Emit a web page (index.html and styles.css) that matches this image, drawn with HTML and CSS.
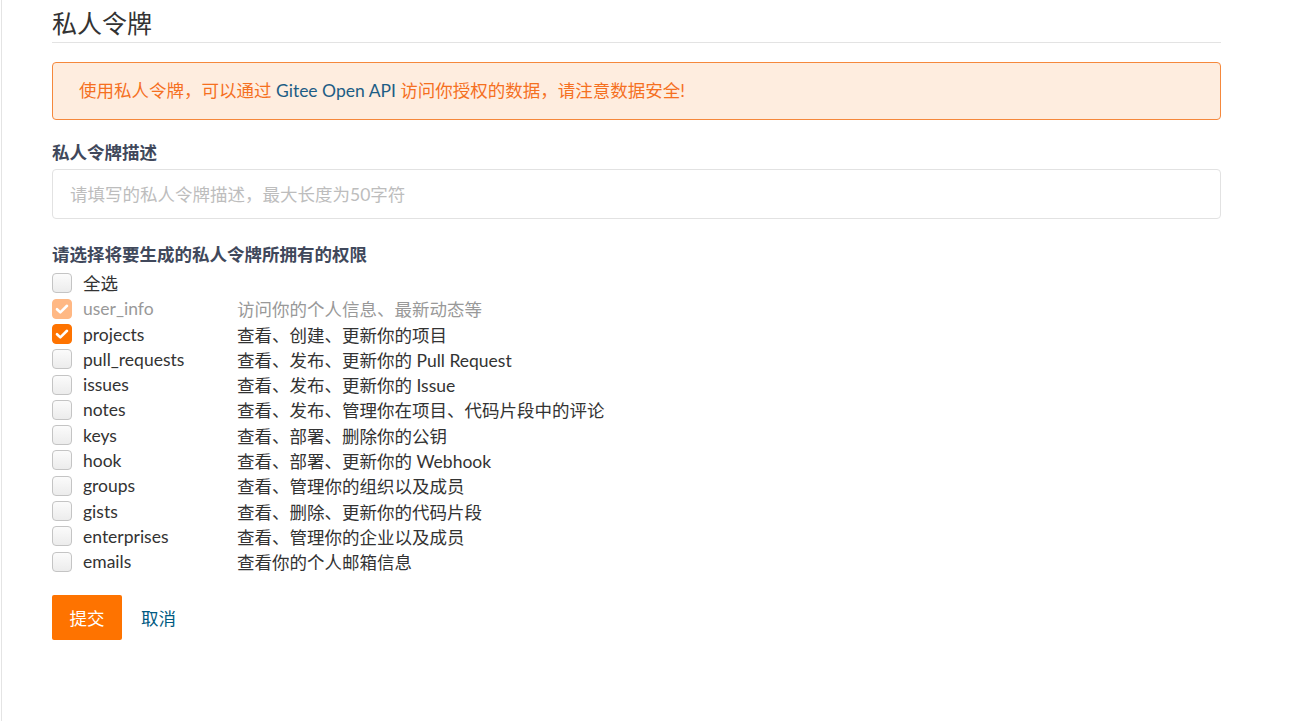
FILE: index.html
```html
<!DOCTYPE html>
<html lang="zh-CN">
<head>
    <meta charset="UTF-8">
    <meta name="viewport" content="width=device-width, initial-scale=1.0">
    <title>私人令牌</title>
    <link rel="stylesheet" href="styles.css">
</head>
<body>

    <div class="page">
        <div class="content">
            <h2 class="title">私人令牌</h2>

            <div class="alert">
                使用私人令牌，可以通过 <span class="api">Gitee Open API</span> 访问你授权的数据，请注意数据安全!
            </div>

            <form class="token-form">
                <label class="field-label">私人令牌描述</label>
                <input class="text-input" type="text" placeholder="请填写的私人令牌描述，最大长度为50字符">

                <label class="field-label scopes-label">请选择将要生成的私人令牌所拥有的权限</label>
                <div class="scopes">
                    <div class="scope select-all">
                        <span class="box"></span>
                        <span class="name">全选</span>
                    </div>
                    <div class="scope disabled">
                        <span class="box checked"><svg viewBox="0 0 20 20"><path d="M5 10.2l3.3 3.2L15 6.8"/></svg></span>
                        <span class="name">user_info</span>
                        <span class="desc">访问你的个人信息、最新动态等</span>
                    </div>
                    <div class="scope">
                        <span class="box checked"><svg viewBox="0 0 20 20"><path d="M5 10.2l3.3 3.2L15 6.8"/></svg></span>
                        <span class="name">projects</span>
                        <span class="desc">查看、创建、更新你的项目</span>
                    </div>
                    <div class="scope">
                        <span class="box"></span>
                        <span class="name">pull_requests</span>
                        <span class="desc">查看、发布、更新你的 Pull Request</span>
                    </div>
                    <div class="scope">
                        <span class="box"></span>
                        <span class="name">issues</span>
                        <span class="desc">查看、发布、更新你的 Issue</span>
                    </div>
                    <div class="scope">
                        <span class="box"></span>
                        <span class="name">notes</span>
                        <span class="desc">查看、发布、管理你在项目、代码片段中的评论</span>
                    </div>
                    <div class="scope">
                        <span class="box"></span>
                        <span class="name">keys</span>
                        <span class="desc">查看、部署、删除你的公钥</span>
                    </div>
                    <div class="scope">
                        <span class="box"></span>
                        <span class="name">hook</span>
                        <span class="desc">查看、部署、更新你的 Webhook</span>
                    </div>
                    <div class="scope">
                        <span class="box"></span>
                        <span class="name">groups</span>
                        <span class="desc">查看、管理你的组织以及成员</span>
                    </div>
                    <div class="scope">
                        <span class="box"></span>
                        <span class="name">gists</span>
                        <span class="desc">查看、删除、更新你的代码片段</span>
                    </div>
                    <div class="scope">
                        <span class="box"></span>
                        <span class="name">enterprises</span>
                        <span class="desc">查看、管理你的企业以及成员</span>
                    </div>
                    <div class="scope">
                        <span class="box"></span>
                        <span class="name">emails</span>
                        <span class="desc">查看你的个人邮箱信息</span>
                    </div>
                </div>

                <div class="actions">
                    <button class="btn-submit" type="button">提交</button>
                    <a class="cancel" href="#">取消</a>
                </div>
            </form>
        </div>
    </div>

</body>
</html>
```

FILE: styles.css
```css
body {
    margin: 0;
    font-family: "Segoe UI", Lato, "Noto Sans CJK SC", sans-serif;
    font-size: 17.5px;
    color: #333;
    background: #fff;
}

.page {
    margin-left: 1px;
    border-left: 1px solid #e4e4e4;
    min-height: 721px;
    box-sizing: border-box;
}

.content {
    width: 1169px;
    padding: 6px 0 0 50px;
}

.title {
    margin: 0;
    font-size: 25px;
    font-weight: normal;
    line-height: 34px;
    padding-bottom: 2px;
    border-bottom: 1px solid #e3e3e3;
    color: #333;
}

.alert {
    margin-top: 19px;
    padding: 0 26px;
    height: 56px;
    line-height: 56px;
    background: #feeddf;
    border: 1px solid #f5883c;
    border-radius: 4px;
    color: #f5701f;
}

.alert .api {
    color: #1d5d85;
}

.token-form {
    display: flex;
    flex-direction: column;
}

.field-label {
    margin-top: 21px;
    line-height: 24px;
    font-weight: bold;
    color: #40485b;
}

.text-input {
    margin-top: 4px;
    height: 50px;
    box-sizing: border-box;
    padding: 0 17px;
    border: 1px solid #e2e2e2;
    border-radius: 4px;
    font-family: inherit;
    font-size: 17.5px;
    color: #333;
    outline: none;
}

.text-input::placeholder {
    color: #bdbdbd;
}

.scopes-label {
    margin-top: 24px;
}

.scopes {
    margin-top: 3px;
}

.scope {
    display: flex;
    align-items: center;
    height: 25.27px;
}

.select-all {
    margin-bottom: 1px;
}

.box {
    width: 20px;
    height: 20px;
    box-sizing: border-box;
    border: 1px solid #c4c4c4;
    border-radius: 4px;
    background: linear-gradient(#fbfbfb, #ececec);
    flex-shrink: 0;
}

.box svg {
    display: block;
    width: 20px;
    height: 20px;
    margin: -1px;
}

.box svg path {
    fill: none;
    stroke: #fff;
    stroke-width: 2.6;
    stroke-linecap: round;
    stroke-linejoin: round;
}

.box.checked {
    background: #fe7300;
    border-color: #fe7300;
}

.disabled .box.checked {
    background: #ffb884;
    border-color: #ffb884;
}

.name {
    margin-left: 11px;
    width: 154px;
}

.desc {
    white-space: nowrap;
}

.disabled .name,
.disabled .desc {
    color: #999;
}

.actions {
    display: flex;
    align-items: center;
    margin-top: 21px;
}

.btn-submit {
    width: 70px;
    height: 45px;
    border: none;
    border-radius: 2px;
    background: #fe7300;
    color: #fff;
    font-family: inherit;
    font-size: 17.5px;
    padding: 0;
}

.cancel {
    margin-left: 19px;
    color: #005a82;
    text-decoration: none;
}
```
